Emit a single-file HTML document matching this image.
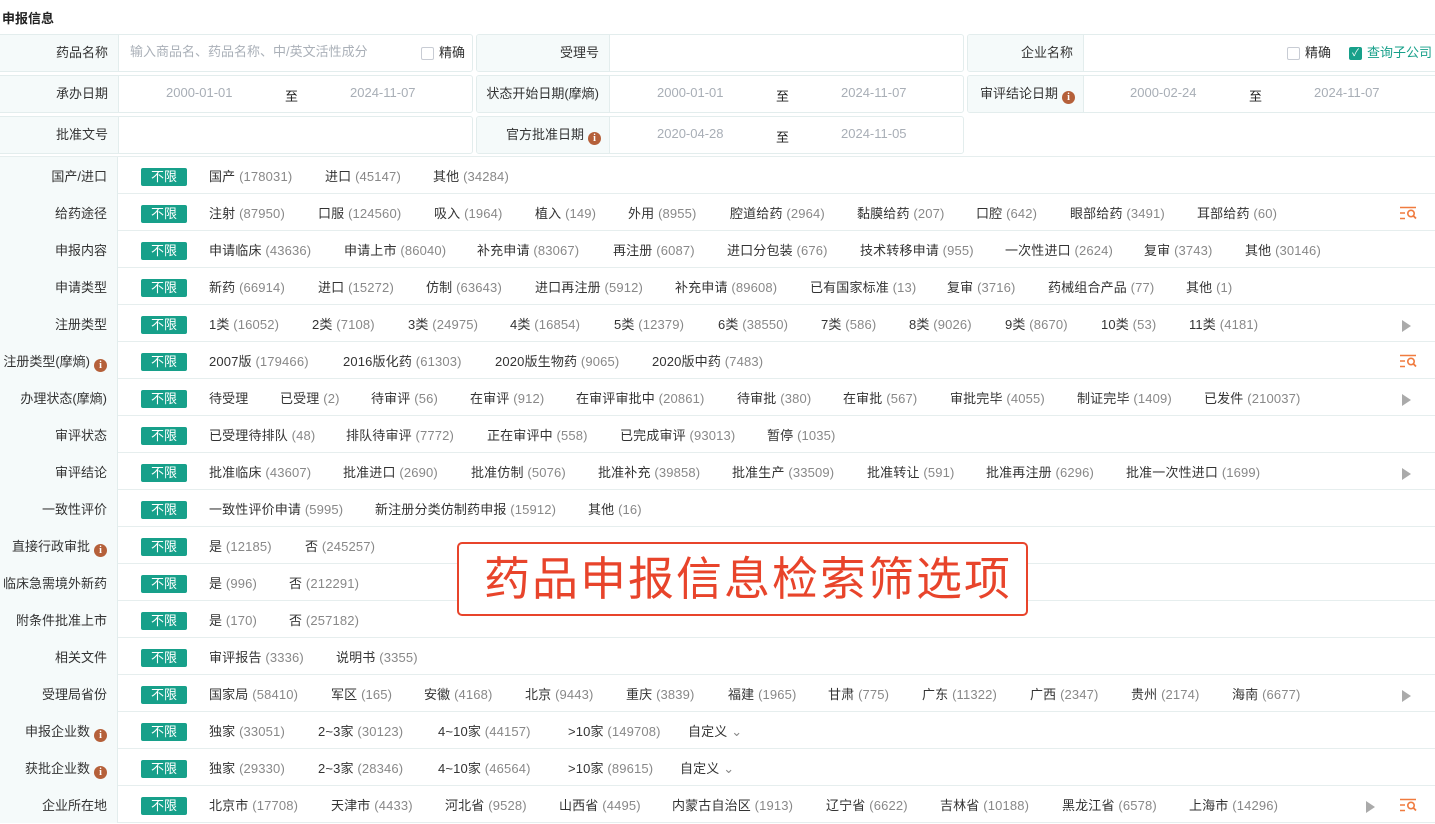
<!DOCTYPE html>
<html><head><meta charset="utf-8">
<style>
*{margin:0;padding:0;box-sizing:border-box}
body{width:1435px;height:818px;overflow:hidden;background:#fff;font-family:"Liberation Sans","Noto Sans CJK SC",sans-serif;font-size:13px;color:#333;position:relative}
.t{position:absolute;left:2px;top:8px;font-size:13px;font-weight:bold;color:#222}
.box{position:absolute;border:1px solid #e3eded;border-radius:3px;height:38px;background:#fff;overflow:hidden}
.box .l{position:absolute;left:0;top:0;bottom:0;background:#f5fafa;border-right:1px solid #e3eded;text-align:right;padding-right:10px;line-height:36px;color:#333}
.ph{position:absolute;top:0;line-height:34px;color:#aab0b8}
.dt{position:absolute;top:0;line-height:34px;color:#a8aeb6}
.zhi{position:absolute;top:4px;line-height:34px;color:#222}
.i{display:inline-block;width:13px;height:13px;border-radius:50%;background:#b5603a;color:#fff;font-size:10px;font-weight:bold;line-height:13px;text-align:center;vertical-align:-2px;margin-left:4px;font-family:"Liberation Serif",serif}
.cb{position:absolute;width:13px;height:13px;border:1px solid #c8ccd4;border-radius:2px;background:#fff}
.row{position:absolute;left:0;width:1435px;height:37px;border-bottom:1px solid #e6eeee}
.row .l{position:absolute;left:0;top:0;width:118px;height:37px;background:#f5fafa;border-right:1px solid #e3eded;text-align:right;padding-right:10px;padding-top:1px;line-height:37px;color:#333;white-space:nowrap}
.b{position:absolute;left:141px;top:11px;width:46px;height:18px;background:#17a08a;color:#fff;border-radius:2px;text-align:center;line-height:18px;font-size:13px}
.row span.v{position:absolute;top:1px;line-height:37px;white-space:nowrap;color:#333;letter-spacing:0.15px}
.row span.v em{font-style:normal;color:#888}
.tri{position:absolute;top:15px;width:0;height:0;border-left:9px solid #aaa;border-top:6px solid transparent;border-bottom:6px solid transparent}
.sq{position:absolute;top:12px;width:18px;height:14px}
.callout{position:absolute;left:457px;top:542px;width:571px;height:74px;border:2px solid #e8442b;border-radius:5px;background:#fff;color:#e8442b;font-size:46px;line-height:70px;padding-left:25px;letter-spacing:2px;white-space:nowrap;font-family:"Liberation Sans","Noto Sans CJK SC",sans-serif}
</style></head><body>
<div class="t">申报信息</div>

<div class="box" style="left:-4px;top:34px;width:477px"><div class="l" style="width:122px">药品名称</div><div class="ph" style="left:133px">输入商品名、药品名称、中/英文活性成分</div><div class="cb" style="left:424px;top:12px"></div><div class="ph" style="left:442px;color:#333;top:1px">精确</div></div>
<div class="box" style="left:476px;top:34px;width:488px"><div class="l" style="width:133px">受理号</div></div>
<div class="box" style="left:967px;top:34px;width:472px"><div class="l" style="width:116px">企业名称</div><div class="cb" style="left:319px;top:12px"></div><div class="ph" style="left:337px;color:#333;top:1px">精确</div><div class="cb" style="left:381px;top:12px;background:#17a08a;border-color:#17a08a;color:#fff;font-size:10px;line-height:11px;text-align:center">✓</div><div class="ph" style="left:399px;color:#17a08a;top:1px">查询子公司</div></div>

<div class="box" style="left:-4px;top:75px;width:477px"><div class="l" style="width:122px">承办日期</div><div class="dt" style="left:169px">2000-01-01</div><div class="zhi" style="left:288px">至</div><div class="dt" style="left:353px">2024-11-07</div></div>
<div class="box" style="left:476px;top:75px;width:488px"><div class="l" style="width:133px">状态开始日期(摩熵)</div><div class="dt" style="left:180px">2000-01-01</div><div class="zhi" style="left:299px">至</div><div class="dt" style="left:364px">2024-11-07</div></div>
<div class="box" style="left:967px;top:75px;width:472px"><div class="l" style="width:116px;padding-right:8px">审评结论日期<span class="i">i</span></div><div class="dt" style="left:162px">2000-02-24</div><div class="zhi" style="left:281px">至</div><div class="dt" style="left:346px">2024-11-07</div></div>

<div class="box" style="left:-4px;top:116px;width:477px"><div class="l" style="width:122px">批准文号</div></div>
<div class="box" style="left:476px;top:116px;width:488px"><div class="l" style="width:133px;padding-right:8px">官方批准日期<span class="i">i</span></div><div class="dt" style="left:180px">2020-04-28</div><div class="zhi" style="left:299px">至</div><div class="dt" style="left:364px">2024-11-05</div></div>

<div style="position:absolute;left:0;top:156px;width:1435px;border-top:1px solid #e6eeee"></div>

<svg width="0" height="0" style="position:absolute"><defs><symbol id="sq" viewBox="0 0 18 14"><path d="M0 1.5H16M0 7H5M0 12.5H5" stroke="#f07b3f" stroke-width="1.6" fill="none"/><circle cx="11" cy="7.5" r="3.2" stroke="#f07b3f" stroke-width="1.6" fill="none"/><path d="M13.3 9.8L16 12.5" stroke="#f07b3f" stroke-width="1.8"/></symbol></defs></svg>

<div class="row" style="top:157px"><div class="l">国产/进口</div><div class="b">不限</div>
<span class="v" style="left:209px">国产 <em>(178031)</em></span><span class="v" style="left:325px">进口 <em>(45147)</em></span><span class="v" style="left:433px">其他 <em>(34284)</em></span></div>

<div class="row" style="top:194px"><div class="l">给药途径</div><div class="b">不限</div>
<span class="v" style="left:209px">注射 <em>(87950)</em></span><span class="v" style="left:318px">口服 <em>(124560)</em></span><span class="v" style="left:434px">吸入 <em>(1964)</em></span><span class="v" style="left:535px">植入 <em>(149)</em></span><span class="v" style="left:628px">外用 <em>(8955)</em></span><span class="v" style="left:730px">腔道给药 <em>(2964)</em></span><span class="v" style="left:857px">黏膜给药 <em>(207)</em></span><span class="v" style="left:976px">口腔 <em>(642)</em></span><span class="v" style="left:1070px">眼部给药 <em>(3491)</em></span><span class="v" style="left:1197px">耳部给药 <em>(60)</em></span>
<svg class="sq" style="left:1400px"><use href="#sq"/></svg></div>

<div class="row" style="top:231px"><div class="l">申报内容</div><div class="b">不限</div>
<span class="v" style="left:209px">申请临床 <em>(43636)</em></span><span class="v" style="left:344px">申请上市 <em>(86040)</em></span><span class="v" style="left:477px">补充申请 <em>(83067)</em></span><span class="v" style="left:613px">再注册 <em>(6087)</em></span><span class="v" style="left:727px">进口分包装 <em>(676)</em></span><span class="v" style="left:860px">技术转移申请 <em>(955)</em></span><span class="v" style="left:1005px">一次性进口 <em>(2624)</em></span><span class="v" style="left:1144px">复审 <em>(3743)</em></span><span class="v" style="left:1245px">其他 <em>(30146)</em></span></div>

<div class="row" style="top:268px"><div class="l">申请类型</div><div class="b">不限</div>
<span class="v" style="left:209px">新药 <em>(66914)</em></span><span class="v" style="left:318px">进口 <em>(15272)</em></span><span class="v" style="left:426px">仿制 <em>(63643)</em></span><span class="v" style="left:535px">进口再注册 <em>(5912)</em></span><span class="v" style="left:675px">补充申请 <em>(89608)</em></span><span class="v" style="left:810px">已有国家标准 <em>(13)</em></span><span class="v" style="left:947px">复审 <em>(3716)</em></span><span class="v" style="left:1048px">药械组合产品 <em>(77)</em></span><span class="v" style="left:1186px">其他 <em>(1)</em></span></div>

<div class="row" style="top:305px"><div class="l">注册类型</div><div class="b">不限</div>
<span class="v" style="left:209px">1类 <em>(16052)</em></span><span class="v" style="left:312px">2类 <em>(7108)</em></span><span class="v" style="left:408px">3类 <em>(24975)</em></span><span class="v" style="left:510px">4类 <em>(16854)</em></span><span class="v" style="left:614px">5类 <em>(12379)</em></span><span class="v" style="left:718px">6类 <em>(38550)</em></span><span class="v" style="left:821px">7类 <em>(586)</em></span><span class="v" style="left:909px">8类 <em>(9026)</em></span><span class="v" style="left:1005px">9类 <em>(8670)</em></span><span class="v" style="left:1101px">10类 <em>(53)</em></span><span class="v" style="left:1189px">11类 <em>(4181)</em></span>
<div class="tri" style="left:1402px"></div></div>

<div class="row" style="top:342px"><div class="l">注册类型(摩熵)<span class="i">i</span></div><div class="b">不限</div>
<span class="v" style="left:209px">2007版 <em>(179466)</em></span><span class="v" style="left:343px">2016版化药 <em>(61303)</em></span><span class="v" style="left:495px">2020版生物药 <em>(9065)</em></span><span class="v" style="left:652px">2020版中药 <em>(7483)</em></span>
<svg class="sq" style="left:1400px"><use href="#sq"/></svg></div>

<div class="row" style="top:379px"><div class="l">办理状态(摩熵)</div><div class="b">不限</div>
<span class="v" style="left:209px">待受理</span><span class="v" style="left:280px">已受理 <em>(2)</em></span><span class="v" style="left:371px">待审评 <em>(56)</em></span><span class="v" style="left:470px">在审评 <em>(912)</em></span><span class="v" style="left:576px">在审评审批中 <em>(20861)</em></span><span class="v" style="left:737px">待审批 <em>(380)</em></span><span class="v" style="left:843px">在审批 <em>(567)</em></span><span class="v" style="left:950px">审批完毕 <em>(4055)</em></span><span class="v" style="left:1077px">制证完毕 <em>(1409)</em></span><span class="v" style="left:1204px">已发件 <em>(210037)</em></span>
<div class="tri" style="left:1402px"></div></div>

<div class="row" style="top:416px"><div class="l">审评状态</div><div class="b">不限</div>
<span class="v" style="left:209px">已受理待排队 <em>(48)</em></span><span class="v" style="left:346px">排队待审评 <em>(7772)</em></span><span class="v" style="left:487px">正在审评中 <em>(558)</em></span><span class="v" style="left:620px">已完成审评 <em>(93013)</em></span><span class="v" style="left:767px">暂停 <em>(1035)</em></span></div>

<div class="row" style="top:453px"><div class="l">审评结论</div><div class="b">不限</div>
<span class="v" style="left:209px">批准临床 <em>(43607)</em></span><span class="v" style="left:343px">批准进口 <em>(2690)</em></span><span class="v" style="left:471px">批准仿制 <em>(5076)</em></span><span class="v" style="left:598px">批准补充 <em>(39858)</em></span><span class="v" style="left:732px">批准生产 <em>(33509)</em></span><span class="v" style="left:867px">批准转让 <em>(591)</em></span><span class="v" style="left:986px">批准再注册 <em>(6296)</em></span><span class="v" style="left:1126px">批准一次性进口 <em>(1699)</em></span>
<div class="tri" style="left:1402px"></div></div>

<div class="row" style="top:490px"><div class="l">一致性评价</div><div class="b">不限</div>
<span class="v" style="left:209px">一致性评价申请 <em>(5995)</em></span><span class="v" style="left:375px">新注册分类仿制药申报 <em>(15912)</em></span><span class="v" style="left:588px">其他 <em>(16)</em></span></div>

<div class="row" style="top:527px"><div class="l">直接行政审批<span class="i">i</span></div><div class="b">不限</div>
<span class="v" style="left:209px">是 <em>(12185)</em></span><span class="v" style="left:305px">否 <em>(245257)</em></span></div>

<div class="row" style="top:564px"><div class="l">临床急需境外新药</div><div class="b">不限</div>
<span class="v" style="left:209px">是 <em>(996)</em></span><span class="v" style="left:289px">否 <em>(212291)</em></span></div>

<div class="row" style="top:601px"><div class="l">附条件批准上市</div><div class="b">不限</div>
<span class="v" style="left:209px">是 <em>(170)</em></span><span class="v" style="left:289px">否 <em>(257182)</em></span></div>

<div class="row" style="top:638px"><div class="l">相关文件</div><div class="b">不限</div>
<span class="v" style="left:209px">审评报告 <em>(3336)</em></span><span class="v" style="left:336px">说明书 <em>(3355)</em></span></div>

<div class="row" style="top:675px"><div class="l">受理局省份</div><div class="b">不限</div>
<span class="v" style="left:209px">国家局 <em>(58410)</em></span><span class="v" style="left:331px">军区 <em>(165)</em></span><span class="v" style="left:424px">安徽 <em>(4168)</em></span><span class="v" style="left:525px">北京 <em>(9443)</em></span><span class="v" style="left:626px">重庆 <em>(3839)</em></span><span class="v" style="left:728px">福建 <em>(1965)</em></span><span class="v" style="left:828px">甘肃 <em>(775)</em></span><span class="v" style="left:922px">广东 <em>(11322)</em></span><span class="v" style="left:1030px">广西 <em>(2347)</em></span><span class="v" style="left:1131px">贵州 <em>(2174)</em></span><span class="v" style="left:1232px">海南 <em>(6677)</em></span>
<div class="tri" style="left:1402px"></div></div>

<div class="row" style="top:712px"><div class="l">申报企业数<span class="i">i</span></div><div class="b">不限</div>
<span class="v" style="left:209px">独家 <em>(33051)</em></span><span class="v" style="left:318px">2~3家 <em>(30123)</em></span><span class="v" style="left:438px">4~10家 <em>(44157)</em></span><span class="v" style="left:568px">&gt;10家 <em>(149708)</em></span><span class="v" style="left:688px">自定义 <em>&#8964;</em></span></div>

<div class="row" style="top:749px"><div class="l">获批企业数<span class="i">i</span></div><div class="b">不限</div>
<span class="v" style="left:209px">独家 <em>(29330)</em></span><span class="v" style="left:318px">2~3家 <em>(28346)</em></span><span class="v" style="left:438px">4~10家 <em>(46564)</em></span><span class="v" style="left:568px">&gt;10家 <em>(89615)</em></span><span class="v" style="left:680px">自定义 <em>&#8964;</em></span></div>

<div class="row" style="top:786px"><div class="l">企业所在地</div><div class="b">不限</div>
<span class="v" style="left:209px">北京市 <em>(17708)</em></span><span class="v" style="left:331px">天津市 <em>(4433)</em></span><span class="v" style="left:445px">河北省 <em>(9528)</em></span><span class="v" style="left:559px">山西省 <em>(4495)</em></span><span class="v" style="left:672px">内蒙古自治区 <em>(1913)</em></span><span class="v" style="left:826px">辽宁省 <em>(6622)</em></span><span class="v" style="left:940px">吉林省 <em>(10188)</em></span><span class="v" style="left:1062px">黑龙江省 <em>(6578)</em></span><span class="v" style="left:1189px">上海市 <em>(14296)</em></span>
<div class="tri" style="left:1366px"></div><svg class="sq" style="left:1400px"><use href="#sq"/></svg></div>

<div class="callout">药品申报信息检索筛选项</div>
</body></html>
